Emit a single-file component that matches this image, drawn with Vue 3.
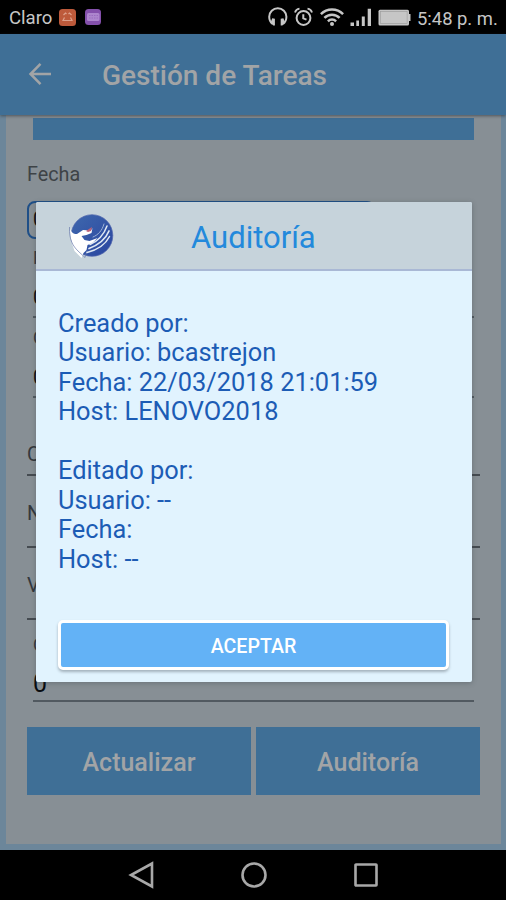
<script setup>
const fields = [
  { kind: 'boxed', value: '0' },
  { kind: 'stacked tall', label: 'F', value: '0' },
  { kind: 'stacked', label: 'C', value: '0' },
  { kind: 'single first', label: 'C' },
  { kind: 'single', label: 'N' },
  { kind: 'single', label: 'V' },
  { kind: 'stacked last', label: 'C', value: '0' },
]

const created = [
  'Creado por:',
  'Usuario: bcastrejon',
  'Fecha: 22/03/2018 21:01:59',
  'Host: LENOVO2018',
]
const edited = ['Editado por:', 'Usuario: --', 'Fecha:', 'Host: --']
</script>

<template>
  <div class="phone">
    <header class="status">
      <span class="carrier">Claro</span>
      <svg class="badge" viewBox="0 0 17 17">
        <rect width="17" height="17" rx="3.5" fill="#bd5a3b" />
        <path d="M4.500 6l2-2 1 1M12.500 6l-2-2-1 1M5.500 8.500l-1.500 3h9l-1.500-3" fill="none" stroke="#dda08b" stroke-width="1.200" />
      </svg>
      <svg class="badge second" viewBox="0 0 17 17">
        <rect width="16" height="16" rx="3.500" fill="#8450ab" />
        <rect x="2" y="4" width="12.500" height="8" rx="1.500" fill="#ad86cd" />
        <path d="M4 6.500h9M4 9h9" stroke="#9a6cbf" stroke-dasharray="1.500 1" />
      </svg>
      <span class="spacer"></span>
      <svg class="headphones" viewBox="0 0 20 20">
        <path d="M4.600 17C1.900 15 1.200 12.600 1.200 9.800a8.600 8.600 0 0 1 17.200 0c0 2.800-.7 5.200-3.400 7.200" fill="none" stroke="#c6c6c6" stroke-width="2" />
        <path d="M4.200 11.200l2.700.6v6.700H5.200L2.600 15.500zM15.400 11.200l-2.700.6v6.700h1.700l2.600-3z" fill="#c6c6c6" />
      </svg>
      <svg class="alarm" viewBox="0 0 19 20">
        <circle cx="9.500" cy="11" r="6.900" fill="none" stroke="#c6c6c6" stroke-width="2" />
        <path d="M9.300 7.200v4.200l3.200 1.200" fill="none" stroke="#c6c6c6" stroke-width="2" />
        <path d="M1 5.500C1.500 3.500 3.200 2 5.500 1.700M18 5.500c-.5-2-2.200-3.500-4.500-3.800" fill="none" stroke="#c6c6c6" stroke-width="1.800" />
      </svg>
      <svg class="wifi" viewBox="0 0 24 20">
        <g fill="none" stroke="#c6c6c6" stroke-width="2.500">
          <path d="M.9 7.200a15.700 15.700 0 0 1 22.200 0" />
          <path d="M4.400 10.900a10.700 10.700 0 0 1 15.200 0" />
          <path d="M7.900 14.300a5.800 5.800 0 0 1 8.200 0" />
        </g>
        <circle cx="12" cy="17" r="2" fill="#c6c6c6" />
      </svg>
      <svg class="signal" viewBox="0 0 22 19">
        <path d="M.5 14.500h3.500V18H.5zM6.300 12.500h2.700V18H6.300zM11.800 8.500h3V18h-3zM17.700.8h3.300V18h-3.300z" fill="#c6c6c6" />
      </svg>
      <svg class="battery" viewBox="0 0 33 17">
        <rect x=".5" y=".8" width="30.500" height="15.700" rx="1.500" fill="#c6c6c6" />
        <rect x="2.300" y="2.600" width="26.800" height="12" fill="none" stroke="#999" stroke-width=".6" />
        <path d="M30.500 5h2v7h-2z" fill="#c6c6c6" />
      </svg>
      <span class="clock">5:48 p. m.</span>
    </header>

    <div class="appbar">
      <svg class="back" viewBox="0 0 24 24">
        <path d="M12.500 1.800L2.500 12l10 10.200M2.500 12H23" fill="none" stroke="#a2a4a6" stroke-width="2.500" />
      </svg>
      <h1>Gestión de Tareas</h1>
    </div>

    <main class="frame">
      <div class="sheet">
        <div class="strip"></div>
        <div class="caption">Fecha</div>
        <div v-for="(field, i) in fields" :key="i" class="field" :class="field.kind">
          <span v-if="field.label" class="label">{{ field.label }}</span>
          <span v-if="field.value" class="value">{{ field.value }}</span>
        </div>
        <div class="actions">
          <button>Actualizar</button>
          <button>Auditoría</button>
        </div>
      </div>
    </main>

    <nav class="navbar">
      <svg viewBox="0 0 28 28"><path d="M24 2.500v23L3 14z" /></svg>
      <svg viewBox="0 0 28 28"><circle cx="14" cy="14" r="11.500" /></svg>
      <svg viewBox="0 0 28 28"><rect x="3.500" y="3.500" width="21" height="21" rx=".5" /></svg>
    </nav>

    <section class="dialog">
      <div class="dialog-head">
        <svg class="logo" viewBox="0 0 46 46">
          <defs>
            <linearGradient id="globe" x1="0" y1="0" x2="1" y2="1">
              <stop offset="0" stop-color="#3f68ad" />
              <stop offset="1" stop-color="#2945a0" />
            </linearGradient>
          </defs>
          <circle cx="24" cy="21.500" r="20.800" fill="url(#globe)" stroke="#5166ad" stroke-width=".7" />
          <path d="M2 14C3 18 5 20 9 20l6-4 8 .5 1.500-2.500-1 5-5 2-5 1 3 4 5 1 8-3-5 5-5 2-1 5-3 3-2 5-7-7C5 32 2 26 2 14z" fill="#fff" />
          <path d="M1.500 13C1 26 5 32 10 37l7 6.500 2-7" fill="none" stroke="#6c7cae" stroke-width=".7" />
          <path d="M18 17l6-4-1 4-3 1z" fill="#bd6178" />
          <g fill="none" stroke="#dfe8f3" stroke-linecap="round">
            <path d="M22 30.500C30 27 36 20.500 39 12" stroke-width="1.500" />
            <path d="M21 34.500c9-3.500 16.500-9 20-17.500" stroke-width="1.700" />
            <path d="M19 38.500c10-2.500 18.500-8 22.500-16" stroke-width="1.500" />
            <path d="M25 23c5-2 9-6 11-13" stroke-width=".9" stroke="#a9bddd" />
          </g>
        </svg>
        <h2>Auditoría</h2>
      </div>
      <div class="dialog-body">
        <div class="lines">
          <p v-for="line in created" :key="line">{{ line }}</p>
        </div>
        <div class="lines">
          <p v-for="line in edited" :key="line">{{ line }}</p>
        </div>
        <button class="accept">ACEPTAR</button>
      </div>
    </section>
  </div>
</template>

<style>
body { margin: 0; background: #000; }
</style>

<style scoped>
* { box-sizing: border-box; }
h1, h2, p { margin: 0; font-weight: 400; }
button { border: 0; padding: 0; font-family: inherit; }
svg { display: block; flex: none; }

.phone {
  position: relative;
  width: 506px;
  height: 900px;
  overflow: hidden;
  display: flex;
  flex-direction: column;
  font-family: Roboto, sans-serif;
  background: #000;
}

.status {
  height: 34px;
  flex: none;
  display: flex;
  align-items: center;
  padding: 0 8px 0 9px;
  color: #c6c6c6;
  font-size: 18.400px;
  white-space: nowrap;
}
.carrier { width: 50px; margin-top: 1px; font-size: 18.600px; }
.badge { width: 17px; height: 17px; }
.badge.second { margin-left: 9px; }
.spacer { flex: 1; }
.headphones { width: 20px; height: 20px; margin-right: 6px; }
.alarm { width: 19px; height: 20px; margin-right: 7px; }
.wifi { width: 24px; height: 20px; margin-right: 6px; }
.signal { width: 22px; height: 19px; margin-top: 1px; margin-right: 6px; }
.battery { width: 33px; height: 17px; margin-right: 6px; }
.clock { width: 81px; margin-top: 3px; }

.appbar {
  height: 81px;
  flex: none;
  display: flex;
  align-items: center;
  padding: 0 28px;
  background: #3f6f96;
  box-shadow: 0 1px 3px rgba(40, 45, 50, 0.6);
  position: relative;
}
.back { width: 24px; height: 24px; margin-top: -2px; }
.appbar h1 {
  margin-left: 50px;
  margin-top: 2px;
  color: #a2a4a6;
  font-size: 28px;
  font-weight: 500;
  white-space: nowrap;
}

.frame {
  height: 735px;
  flex: none;
  padding: 0 5px 6px 6px;
  background: #6c869a;
}
.sheet {
  height: 729px;
  padding: 3px 21px 0;
  background: #878f95;
}
.strip {
  height: 22px;
  margin: 0 6px;
  background: #3f6f96;
}
.caption {
  height: 61px;
  padding-top: 23px;
  font-size: 19.800px;
  line-height: 23px;
  color: #3e4347;
}
.field {
  display: flex;
  flex-direction: column;
  justify-content: flex-end;
  color: #33383d;
  font-size: 20px;
  line-height: 24px;
}
.value { color: #090c10; }
.boxed {
  width: 348px;
  height: 38px;
  padding: 0 0 6px 4px;
  border: 2px solid #1f4f87;
  border-radius: 8px;
}
.stacked {
  height: 80px;
  margin: 0 6px;
  padding-bottom: 7px;
  border-bottom: 2px solid #515960;
}
.tall { height: 79px; }
.stacked .label { font-size: 18px; margin-bottom: 15px; }
.single {
  height: 72px;
  padding-bottom: 21px;
  border-bottom: 2px solid #454b51;
}
.first { height: 78px; padding-bottom: 8px; }
.last { height: 82px; padding-bottom: 2px; }
.last .label { margin-bottom: 13px; }
.last .value { font-size: 25px; line-height: 28px; }

.actions {
  display: grid;
  grid-template-columns: 1fr 1fr;
  gap: 5px;
  margin-top: 25px;
}
.actions button {
  height: 68px;
  padding-top: 2px;
  background: #3f6f96;
  color: #a2a4a6;
  font-size: 25px;
  font-weight: 500;
}

.navbar {
  height: 50px;
  flex: none;
  display: flex;
  justify-content: center;
  align-items: center;
  gap: 84px;
  padding-left: 1px;
}
.navbar svg {
  width: 28px;
  height: 28px;
  fill: none;
  stroke: #a8a8a8;
  stroke-width: 2.600;
}

.dialog {
  position: absolute;
  left: 36px;
  top: 202px;
  width: 436px;
  height: 480px;
  border-radius: 2px;
  overflow: hidden;
  background: #e1f3fe;
  box-shadow: 0 1px 5px rgba(50, 60, 65, 0.35);
}
.dialog-head {
  height: 69px;
  display: flex;
  align-items: center;
  padding-left: 32px;
  background: #c6d3db;
  border-bottom: 2px solid #a9b8d5;
}
.logo { width: 46px; height: 46px; margin-top: 2px; }
.dialog-head h2 {
  margin-left: 77px;
  margin-top: 3px;
  font-size: 31px;
  color: #2389dc;
}
.dialog-body {
  display: flex;
  flex-direction: column;
  padding: 37.500px 23px 0 22px;
}
.lines {
  margin-bottom: 29.500px;
  color: #1c5cb5;
  font-size: 25.400px;
  line-height: 29.500px;
  white-space: nowrap;
}
.accept {
  height: 50px;
  margin: 16.500px 0 0;
  padding-top: 3px;
  border: 3px solid #fff;
  border-radius: 5px;
  background: #63b2f6;
  color: #fff;
  font-size: 19.600px;
  font-weight: 500;
  box-shadow: 0 2px 3px rgba(70, 80, 90, 0.4);
}
</style>
